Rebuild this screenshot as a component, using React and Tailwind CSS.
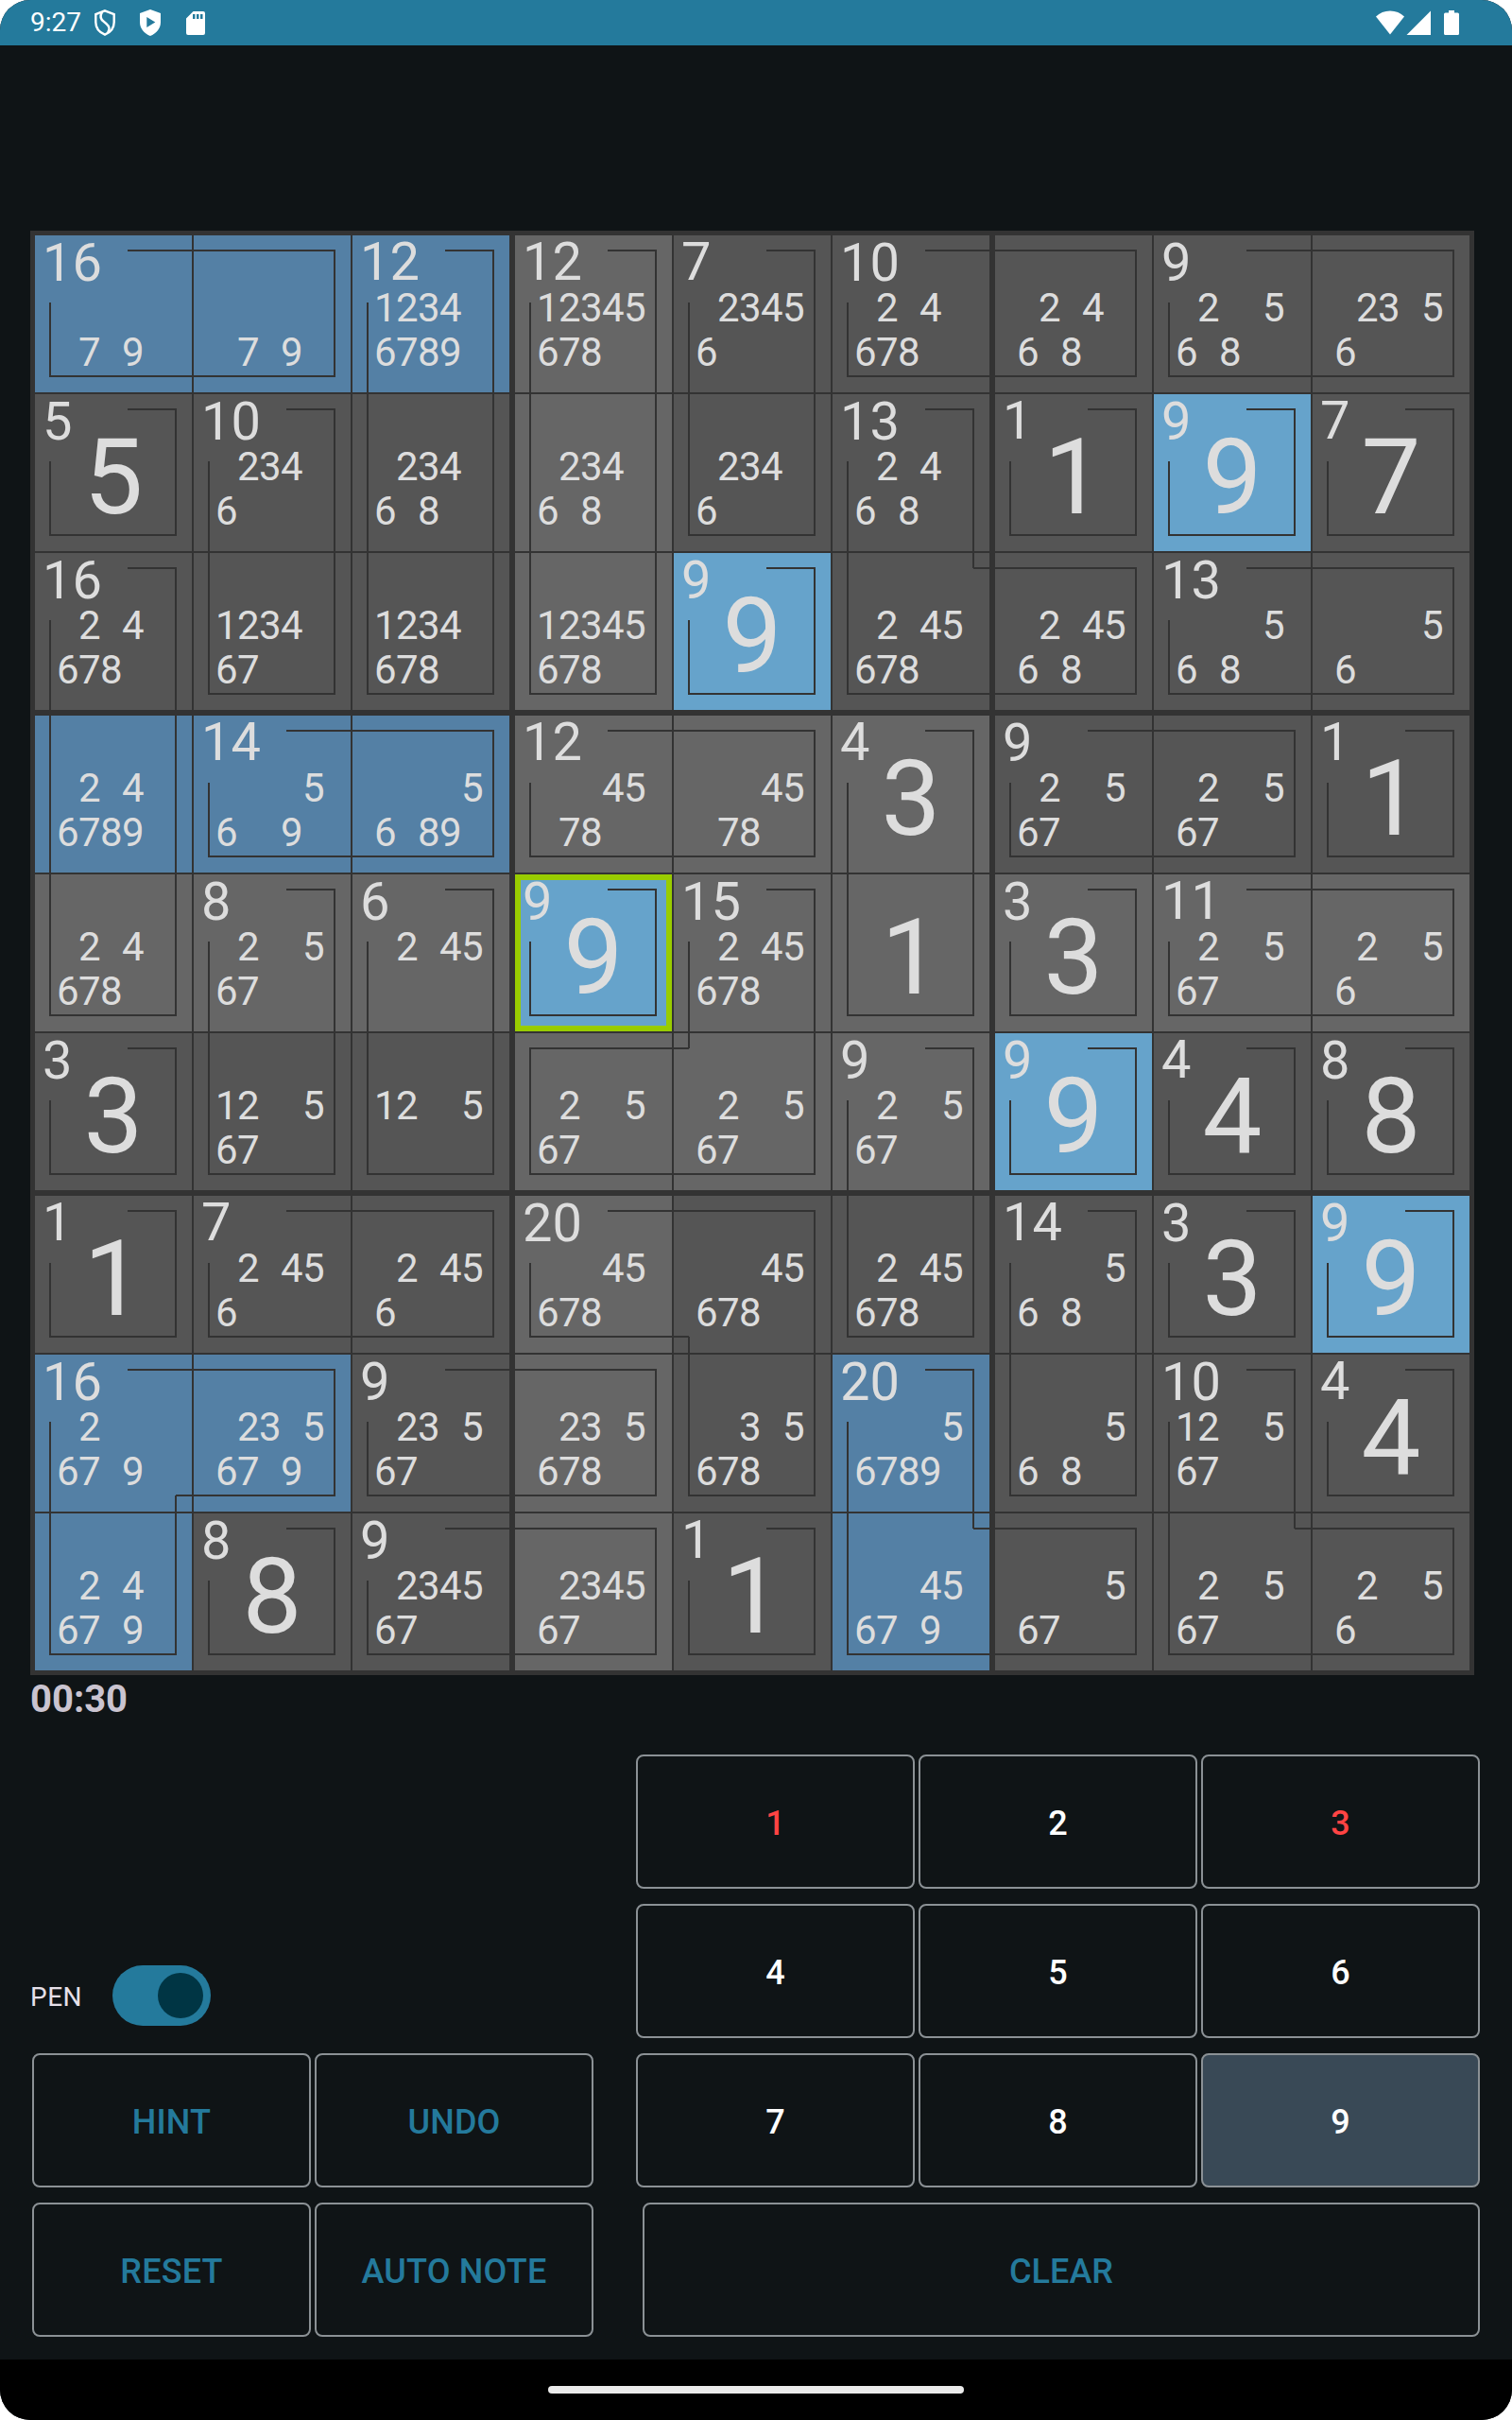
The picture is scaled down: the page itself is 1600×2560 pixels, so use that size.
import { useState } from 'react'
import clsx from 'clsx'

//same letter = same cage
const CAGES = [
	'AABCDEEFF',
	'GHBCDIJKL',
	'MHBCNIIOO',
	'MPPQQRSST',
	'MUVWXRYZZ',
	'aUVXXbcde',
	'fgghhbijk',
	'llmmhniop',
	'lqrrsnnoo',
]

const SUMS = {
	A: 16, B: 12, C: 12, D: 7, E: 10, F: 9,
	G: 5, H: 10, I: 13, J: 1, K: 9, L: 7,
	M: 16, N: 9, O: 13,
	P: 14, Q: 12, R: 4, S: 9, T: 1,
	U: 8, V: 6, W: 9, X: 15, Y: 3, Z: 11,
	a: 3, b: 9, c: 9, d: 4, e: 8,
	f: 1, g: 7, h: 20, i: 14, j: 3, k: 9,
	l: 16, m: 9, n: 20, o: 10, p: 4,
	q: 8, r: 9, s: 1,
}

//"=5" is a filled in digit, everything else is pencil marks
const CELLS = [
	['79', '79', '12346789', '12345678', '23456', '24678', '2468', '2568', '2356'],
	['=5', '2346', '23468', '23468', '2346', '2468', '=1', '=9', '=7'],
	['24678', '123467', '1234678', '12345678', '=9', '245678', '24568', '568', '56'],
	['246789', '569', '5689', '4578', '4578', '=3', '2567', '2567', '=1'],
	['24678', '2567', '245', '=9', '245678', '=1', '=3', '2567', '256'],
	['=3', '12567', '125', '2567', '2567', '2567', '=9', '=4', '=8'],
	['=1', '2456', '2456', '45678', '45678', '245678', '568', '=3', '=9'],
	['2679', '235679', '23567', '235678', '35678', '56789', '568', '12567', '=4'],
	['24679', '=8', '234567', '234567', '=1', '45679', '567', '2567', '256'],
]

const THREE = [0, 1, 2]
const NINE = [0, 1, 2, 3, 4, 5, 6, 7, 8]
const NEAR = 16 // inset of the cage line, left / top
const FAR = 149 // right / bottom

const cageAt = (r, c) => (CAGES[r] ? CAGES[r][c] : undefined)

//start of a row or column inside the board
const start = (i) => 5 + i * 168 + Math.floor(i / 3) * 4

const isFirst = (r, c) => {
	const id = cageAt(r, c)
	const row = CAGES.findIndex(line => line.includes(id))
	return row === r && CAGES[row].indexOf(id) === c
}

const cagePath = () => {
	let d = ''
	NINE.forEach(r => NINE.forEach(c => {
		const id = cageAt(r, c)
		const same = (dr, dc) => cageAt(r + dr, c + dc) === id
		const x = start(c)
		const y = start(r)
		//run on to the next cell when it belongs to the same cage
		const left = same(0, -1) ? start(c - 1) + FAR : x + NEAR - 1
		const right = same(0, 1) ? start(c + 1) + NEAR : x + FAR + 1
		const top = same(-1, 0) ? start(r - 1) + FAR : y + NEAR - 1
		const bottom = same(1, 0) ? start(r + 1) + NEAR : y + FAR + 1
		const first = isFirst(r, c)

		if (!same(-1, 0)) d += `M${first ? x + 98 : left} ${y + NEAR}H${right}`
		if (!same(1, 0)) d += `M${left} ${y + FAR}H${right}`
		if (!same(0, -1)) d += `M${x + NEAR} ${first ? y + 71 : top}V${bottom}`
		if (!same(0, 1)) d += `M${x + FAR} ${top}V${bottom}`
	}))
	return d
}

const noteLine = (notes, digits) => digits.split('').map(n => (notes.includes(n) ? n : '\u2007')).join('')

const Cell = ({ r, c, selected, active, onSelect }) => {
	const value = CELLS[r][c]
	const filled = value[0] === '='
	const sum = isFirst(r, c) ? String(SUMS[cageAt(r, c)]) : ''
	const picked = selected.r === r && selected.c === c
	const sameBox = Math.floor(selected.r / 3) === Math.floor(r / 3) && Math.floor(selected.c / 3) === Math.floor(c / 3)
	const peer = selected.r === r || selected.c === c || sameBox
	const hasActive = value.includes(active)

	return (
		<div
			onClick={() => onSelect({ r, c })}
			className={clsx(
				'relative h-[166px] w-[166px] text-[#dddddd]',
				hasActive && filled && 'bg-[#66a3cb]',
				hasActive && !filled && 'bg-[#5480a5]',
				!hasActive && peer && 'bg-[#666666]',
				!hasActive && !peer && 'bg-[#555555]',
			)}
		>
			{picked && <div className="absolute inset-0 border-[6px] border-[#99cc00]" />}
			{sum && (
				<span className={clsx('absolute left-2 text-[56px] leading-[54px]', /^[1247]+$/.test(sum) ? 'top-px' : 'top-[2px]')}>
					{sum}
				</span>
			)}
			{filled ? (
				<div className="pt-[5px] text-center text-[112px] leading-[166px]">{value[1]}</div>
			) : (
				<div className="flex flex-col gap-[6px] pt-[56px] pl-[23px] text-[42px] leading-[41px] tracking-[-0.6px] whitespace-pre">
					<div>{noteLine(value, '12345')}</div>
					<div>{noteLine(value, '6789')}</div>
				</div>
			)}
		</div>
	)
}

const Board = ({ active }) => {
	const [selected, setSelected] = useState({ r: 4, c: 3 })

	return (
		<div className="relative w-[1528px] bg-[#333333] p-[5px]">
			<div className="grid grid-cols-3 gap-[6px]">
				{NINE.map(box => (
					<div key={box} className="grid grid-cols-3 gap-[2px]">
						{THREE.map(i => THREE.map(j => {
							const r = Math.floor(box / 3) * 3 + i
							const c = (box % 3) * 3 + j
							return <Cell key={`${r}${c}`} r={r} c={c} selected={selected} active={active} onSelect={setSelected} />
						}))}
					</div>
				))}
			</div>
			<svg className="pointer-events-none absolute inset-0" width="1528" height="1528">
				<path d={cagePath()} fill="none" stroke="#333333" strokeWidth="2" />
			</svg>
		</div>
	)
}

const StatusBar = () => (
	<div className="flex h-12 shrink-0 items-center justify-between bg-[#247a9c] text-white">
		<div className="flex items-center pl-8">
			<span className="w-[68px] text-[28px] leading-[46px]">9:27</span>
			<svg width="22" height="28" viewBox="0 0 22 28" fill="none" stroke="currentColor" strokeWidth="2.4">
				<path d="M11 1.4 20.7 5v8.4c0 6-4 10.800-9.700 13.200C5.300 24.200 1.300 19.400 1.300 13.400V5z" />
				<path d="M8 2.800C5.500 7 6.500 10.500 10 13s6 4.500 5.500 8c-.2 1.300-.8 2.400-1.500 3.200" />
			</svg>
			<svg className="ml-[26px]" width="22" height="28" viewBox="0 0 22 28" fill="currentColor">
				<path fillRule="evenodd" d="M11 0 22 4v9.500C22 20 17.500 25.500 11 28 4.500 25.500 0 20 0 13.500V4zM7.300 8v11l9-5.500z" />
			</svg>
			<svg className="ml-[27px]" width="20" height="25" viewBox="0 0 20 25" fill="currentColor">
				<path fillRule="evenodd" d="M7.500 0H18a2 2 0 0 1 2 2v21a2 2 0 0 1-2 2H2a2 2 0 0 1-2-2V7.500zM7 3v5h2.500V3zM11 3v5h2.500V3zM15 3v5h2.500V3z" />
			</svg>
		</div>
		<div className="flex items-center pr-14">
			<svg width="30" height="26" viewBox="0 0 30 26" fill="currentColor">
				<path d="M0 6.500C4 2.500 9 .5 15 .5s11 2 15 6L15 25.500z" />
			</svg>
			<svg className="ml-[2px]" width="26" height="26" viewBox="0 0 26 26" fill="currentColor">
				<path d="M26 .500V26H.500z" />
			</svg>
			<svg className="ml-[14px]" width="16" height="26" viewBox="0 0 16 26" fill="currentColor">
				<path d="M5 0h6v2.500h3.500A1.500 1.500 0 0 1 16 4v20.500a1.500 1.500 0 0 1-1.500 1.500h-13A1.500 1.500 0 0 1 0 24.500V4a1.500 1.500 0 0 1 1.500-1.500H5z" />
			</svg>
		</div>
	</div>
)

const Button = ({ children, className, onClick }) => (
	<button
		onClick={onClick}
		className={clsx('h-[142px] rounded-lg border-2 border-[#8b9195] pt-[4px] text-[36px] font-medium', className)}
	>
		{children}
	</button>
)

const Keypad = ({ active, setActive }) => (
	<div className="flex w-[893px] flex-col gap-4">
		<div className="grid grid-cols-3 gap-x-1 gap-y-4">
			{['1', '2', '3', '4', '5', '6', '7', '8', '9'].map(n => (
				<Button
					key={n}
					onClick={() => setActive(n)}
					className={clsx(n === '1' || n === '3' ? 'text-[#ff4444]' : 'text-white', n === active && 'bg-[#394956]')}
				>
					{n}
				</Button>
			))}
		</div>
		<Button className="ml-[7px] text-[#247a9c]">CLEAR</Button>
	</div>
)

const App = () => {
	const [active, setActive] = useState('9')
	const [pen, setPen] = useState(true)

	return (
		<div className="flex h-[2560px] w-[1600px] flex-col overflow-hidden rounded-[32px] bg-[#0f1416] font-['Roboto',sans-serif]">
			<StatusBar />

			<div className="flex h-[2448px] flex-col px-8 pt-[196px] pb-6">
				<Board active={active} />
				<p className="text-[40px] leading-[51px] font-bold text-[#cac4d0]">00:30</p>

				<div className="mt-auto flex items-end justify-between pr-[2px]">
					<div>
						<div className="mb-[29px] flex items-center gap-8">
							<span className="w-[55px] pt-[3px] text-[28px] tracking-[0.5px] text-[#e6e0e9]">PEN</span>
							<button
								onClick={() => setPen(!pen)}
								className={clsx('flex h-16 w-[104px] items-center rounded-full bg-[#247a9c] p-2', pen && 'justify-end')}
							>
								<span className="h-12 w-12 rounded-full bg-[#003544]" />
							</button>
						</div>
						<div className="ml-[2px] grid grid-cols-[295px_295px] gap-x-1 gap-y-4 tracking-[0.2px] text-[#247a9c]">
							<Button>HINT</Button>
							<Button>UNDO</Button>
							<Button>RESET</Button>
							<Button>AUTO NOTE</Button>
						</div>
					</div>
					<Keypad active={active} setActive={setActive} />
				</div>
			</div>

			<div className="flex h-16 shrink-0 justify-center bg-black pt-7">
				<div className="h-2 w-[440px] rounded-full bg-[#ebebeb]" />
			</div>
		</div>
	)
}

export default App
